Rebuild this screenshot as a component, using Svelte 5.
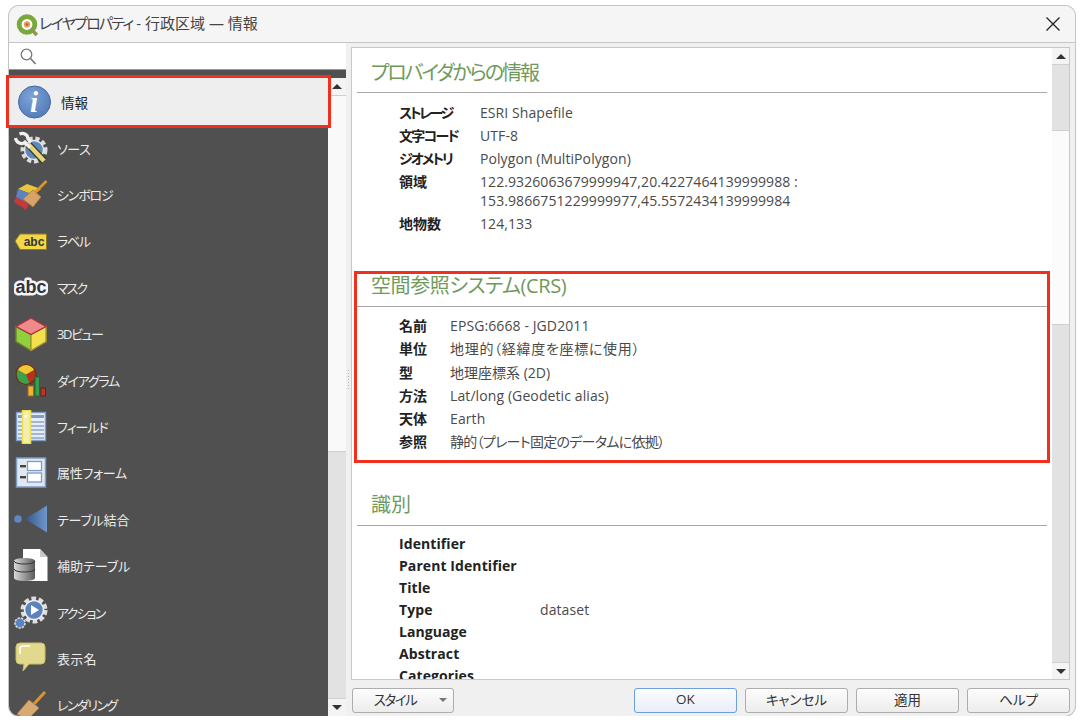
<script>
	// ls: tracking per label, kana in the original font run narrower than Noto's
	const items = [
		{ id: 'info', label: '情報', ls: 0 },
		{ id: 'source', label: 'ソース', ls: -0.4 },
		{ id: 'symbology', label: 'シンボロジ', ls: -1.2 },
		{ id: 'labels', label: 'ラベル', ls: -1.3 },
		{ id: 'mask', label: 'マスク', ls: -2 },
		{ id: 'view3d', label: '3Dビュー', ls: -1.4 },
		{ id: 'diagram', label: 'ダイアグラム', ls: -1.3 },
		{ id: 'fields', label: 'フィールド', ls: -1 },
		{ id: 'form', label: '属性フォーム', ls: -0.3 },
		{ id: 'join', label: 'テーブル結合', ls: -0.2 },
		{ id: 'aux', label: '補助テーブル', ls: 0 },
		{ id: 'actions', label: 'アクション', ls: -1.8 },
		{ id: 'display', label: '表示名', ls: 0.3 },
		{ id: 'rendering', label: 'レンダリング', ls: -1.5 }
	];

	const provider = [
		['ストレージ', 'ESRI Shapefile', -2.4],
		['文字コード', 'UTF-8', -1.7],
		['ジオメトリ', 'Polygon (MultiPolygon)', -2.1],
		['領域', '122.9326063679999947,20.4227464139999988 :\n153.9866751229999977,45.5572434139999984', 0],
		['地物数', '124,133', 0]
	];

	const crs = [
		['名前', 'EPSG:6668 - JGD2011', 0.1],
		['単位', '地理的（経緯度を座標に使用）', 0.7],
		['型', '地理座標系 (2D)', 0],
		['方法', 'Lat/long (Geodetic alias)', 0.1],
		['天体', 'Earth', 0.1],
		['参照', '静的（プレート固定のデータムに依拠）', -0.7]
	];

	const identification = [
		['Identifier', ''],
		['Parent Identifier', ''],
		['Title', ''],
		['Type', 'dataset'],
		['Language', ''],
		['Abstract', ''],
		['Categories', '']
	];
</script>

<div class="window">
	<header class="titlebar">
		<svg class="logo" viewBox="0 0 22 22" width="23" height="23">
			<circle cx="10.5" cy="10" r="7.5" fill="#fff" stroke="#79a83c" stroke-width="4.6" />
			<path d="M14 14l6 6" stroke="#8a9a50" stroke-width="3.4" />
			<circle cx="10.5" cy="10" r="3" fill="#e8a05c" />
			<circle cx="10.5" cy="10" r="1.2" fill="#d8503c" />
		</svg>
		<span class="title"><span class="kana">レイヤプロパティ</span> - 行政区域 — 情報</span>
		<svg class="close" viewBox="0 0 14 14" width="14" height="14">
			<path d="M0.5 0.5l13 13M13.5 0.5l-13 13" stroke="#222" stroke-width="1.3" fill="none" />
		</svg>
	</header>

	<div class="body">
		<div class="left">
			<div class="search">
				<svg viewBox="0 0 16 17" width="16" height="17">
					<circle cx="6.5" cy="6.5" r="5.3" fill="none" stroke="#777" stroke-width="1.3" />
					<path d="M10.5 10.5l5 5.5" stroke="#777" stroke-width="1.6" />
				</svg>
			</div>
			<div class="band"></div>
			<div class="nav">
				<div class="list">
					{#each items as item, i}
						<div class="item" class:selected={i === 0}>
							<svg class="icon" viewBox="0 0 34 34" width="34" height="34">
								{#if item.id === 'info'}
									<defs>
										<radialGradient id="infoFill" cx="0.4" cy="0.35" r="0.75">
											<stop offset="0" stop-color="#7da3d8" />
											<stop offset="1" stop-color="#4f78b6" />
										</radialGradient>
									</defs>
									<circle cx="16.5" cy="17" r="16" fill="url(#infoFill)" stroke="#45699f" />
									<text x="16" y="26.5" class="info-i">i</text>
								{:else if item.id === 'source'}
									<circle cx="20" cy="19" r="11" fill="none" stroke="#dcdcdc" stroke-width="5" stroke-dasharray="4 2.6" />
									<circle cx="20" cy="19" r="9.5" fill="#5f88bd" stroke="#e8e8e8" stroke-width="1.4" />
									<path d="M14 13l16 17" stroke="#3a3a2a" stroke-width="7" />
									<path d="M14 13l16 17" stroke="#e6d67a" stroke-width="4.6" />
									<path d="M1.500 7c1 5 6 7 9.500 4.500l5 5" fill="none" stroke="#f0f0f0" stroke-width="3.200" />
									<path d="M5.500 3c4-1.500 8.500 0.500 8.500 5l3 3.500" fill="none" stroke="#f0f0f0" stroke-width="3.200" />
								{:else if item.id === 'symbology'}
									<path d="M4 11l9-5 14 5-7 6z" fill="#e8c83a" />
									<path d="M2 19l2-8 16 6-5 9z" fill="#5b83c0" />
									<path d="M0 24l2-5 13 7-3 6z" fill="#c8383a" />
									<path d="M32.5 3l-11 11" stroke="#d8962c" stroke-width="2.6" />
									<path d="M19 12l8 7-8 10-10-8z" fill="#d8a268" stroke="#a87840" stroke-width="0.8" />
								{:else if item.id === 'labels'}
									<path d="M1 17l5-7h26.5v15.5H6z" fill="#f0d848" stroke="#8d7a22" />
									<text x="20" y="22" class="abc-small">abc</text>
								{:else if item.id === 'mask'}
									<text x="17" y="23" class="abc-mask">abc</text>
								{:else if item.id === 'view3d'}
									<path d="M17 17.5L2 9.5v15l15 9z" fill="#8ed03e" stroke="#70862c" stroke-width="1.4" />
									<path d="M17 17.5l15-8v15l-15 9z" fill="#f4e04e" stroke="#a99c30" stroke-width="1.4" />
									<path d="M17 1L32 9.5l-15 8L2 9.5z" fill="#ee8a8a" stroke="#a8343a" stroke-width="1.4" />
								{:else if item.id === 'diagram'}
									<path d="M12 11.5l8.8-5a10 10 0 0 1-5 14.4z" fill="#b8301e" />
									<path d="M12 11.5l3.8 9.4A10 10 0 0 1 3.200 6.500z" fill="#3ea04a" />
									<path d="M12 11.500L3.200 6.500A10 10 0 0 1 20.800 6.500z" fill="#f2c832" />
									<circle cx="12" cy="11.500" r="10" fill="none" stroke="#6a2a14" stroke-width="1.2" />
									<rect x="14" y="23" width="5.500" height="10" fill="#f2b332" stroke="#9c6a1c" />
									<rect x="21" y="14" width="4.500" height="19" fill="#35a04c" stroke="#1e6a30" />
									<rect x="27" y="25" width="4.500" height="8" fill="#c03426" stroke="#701a12" />
								{:else if item.id === 'fields'}
									<rect x="2.500" y="2.500" width="29" height="28" fill="#e6edf6" stroke="#7d9cc6" stroke-width="1.400" />
									<rect x="4" y="5" width="26" height="3" fill="#7d9cc6" />
									<path d="M4 12h26M4 16h26M4 20h26M4 24h26M4 28h26" stroke="#8aa4c8" stroke-width="1.400" />
									<rect x="8.500" y="0.500" width="8" height="33" fill="#f4eeae" stroke="#f0e050" stroke-width="1.600" />
									<rect x="10.500" y="5" width="2.500" height="2.500" fill="#fff" />
								{:else if item.id === 'form'}
									<rect x="2.500" y="2" width="29" height="29" fill="#e2e8f1" stroke="#7d9cc6" stroke-width="1.500" />
									<rect x="6" y="9" width="6" height="2.400" fill="#444" />
									<rect x="6" y="20" width="6" height="2.400" fill="#444" />
									<rect x="13.500" y="5.500" width="14" height="9" fill="#fff" stroke="#7d9cc6" stroke-width="1.300" />
									<rect x="13.500" y="17" width="14" height="9" fill="#fff" stroke="#7d9cc6" stroke-width="1.300" />
								{:else if item.id === 'join'}
									<defs>
										<linearGradient id="joinFill" x1="0" x2="1" y1="0" y2="0">
											<stop offset="0" stop-color="#33568c" />
											<stop offset="1" stop-color="#6f97ca" />
										</linearGradient>
									</defs>
									<circle cx="4" cy="17" r="3.800" fill="#5f88c0" />
									<path d="M11 17L33 3.500v27z" fill="url(#joinFill)" />
								{:else if item.id === 'aux'}
									<defs>
										<linearGradient id="auxFill" x1="0" x2="1" y1="0" y2="0">
											<stop offset="0" stop-color="#d8d8d8" />
											<stop offset="0.500" stop-color="#9a9a9a" />
											<stop offset="1" stop-color="#5a5a5a" />
										</linearGradient>
									</defs>
									<path d="M9 0h17l7.500 8v24H9z" fill="#fff" />
									<path d="M26 0l7.500 8H26z" fill="#c8c8c8" />
									<path d="M0 12c0-4 21-4 21 0v17c0 4-21 4-21 0z" fill="url(#auxFill)" />
									<path d="M0 12c0 4 21 4 21 0M0 20c0 4 21 4 21 0" fill="none" stroke="#333" stroke-width="1" />
								{:else if item.id === 'actions'}
									<circle cx="20" cy="15" r="11" fill="none" stroke="#dedede" stroke-width="5" stroke-dasharray="4.500 2.500" />
									<circle cx="20" cy="15" r="9.500" fill="#5b83c0" stroke="#eee" stroke-width="1.600" />
									<path d="M17 10l8 5-8 5z" fill="#fff" />
									<circle cx="6" cy="28" r="5" fill="#5b83c0" stroke="#ddd" stroke-width="1.600" stroke-dasharray="2.400 1" />
								{:else if item.id === 'display'}
									<path d="M6 2h21a4 4 0 0 1 4 4v13a4 4 0 0 1-4 4H15l-6 7 1-7H6a4 4 0 0 1-4-4V6a4 4 0 0 1 4-4z" fill="#e2d88e" stroke="#cdbf62" />
									<path d="M6 13V8c0-2 1-3 3-3h7" fill="none" stroke="#fff" stroke-width="1.600" />
								{:else}
									<path d="M31 4L19 17" stroke="#d8962c" stroke-width="3" />
									<path d="M15 12l10 8-12 12-10-6z" fill="#d8a972" stroke="#b08448" stroke-width="0.800" />
								{/if}
							</svg>
							<span style:letter-spacing="{item.ls}px">{item.label}</span>
						</div>
					{/each}
				</div>
				<div class="vscroll">
					<div class="arrow-btn"><i class="up"></i></div>
					<div class="track"></div>
					<div class="track thumb"></div>
					<div class="arrow-btn low"><i class="down"></i></div>
				</div>
			</div>
		</div>

		<div class="splitter"></div>

		<div class="right">
			<div class="frame">
				<div class="content">
					<section class="provider">
						<h2>プロバイダからの情報</h2>
						<div class="rows">
							{#each provider as [k, v, ls]}
								<div class="row"><b style:letter-spacing="{ls}px">{k}</b><span>{v}</span></div>
							{/each}
						</div>
					</section>
					<section class="crs">
						<h2>空間参照システム(CRS)</h2>
						<div class="rows">
							{#each crs as [k, v, ls]}
								<div class="row"><b>{k}</b><span style:letter-spacing="{ls}px">{v}</span></div>
							{/each}
						</div>
					</section>
					<section class="ident">
						<h2>識別</h2>
						<div class="rows">
							{#each identification as [k, v]}
								<div class="row"><b>{k}</b><span>{v}</span></div>
							{/each}
						</div>
					</section>
				</div>
				<div class="vscroll page">
					<div class="arrow-btn"><i class="up"></i></div>
					<div class="seg seg-a"></div>
					<div class="seg seg-b"></div>
					<div class="seg seg-c"></div>
					<div class="arrow-btn low"><i class="down"></i></div>
				</div>
			</div>
			<footer class="buttons">
				<button class="style-btn"><span class="kana">スタイル</span><i class="down"></i></button>
				<button class="ok">OK</button>
				<button>キャンセル</button>
				<button>適用</button>
				<button>ヘルプ</button>
			</footer>
		</div>
	</div>
</div>

<style>
	:global(body) {
		background: #fff;
	}

	.window {
		box-sizing: border-box;
		margin: 6px 0 0 9px;
		width: 1066px;
		height: 710px;
		display: flex;
		flex-direction: column;
		background: #f0f0f0;
		border-radius: 10px;
		box-shadow: 0 0 0 1px #c4c4c4;
		font-family: 'Open Sans', 'Noto Sans CJK JP', sans-serif;
		font-feature-settings: 'palt';
		font-size: 14px;
		color: #444;
	}

	.titlebar {
		flex: none;
		height: 36px;
		display: flex;
		align-items: center;
		padding: 0 15px 0 7px;
		border-bottom: 1px solid #c6c6c6;
		background: #f5f5f5;
		border-radius: 10px 10px 0 0;
		box-sizing: content-box;
	}

	.title {
		font-size: 15px;
		color: #444;
		margin: -3px 0 0 0;
	}

	.title .kana {
		letter-spacing: -1.7px;
	}

	.logo {
		margin-top: 2px;
	}

	.close {
		margin-left: auto;
	}

	.body {
		flex: 1;
		display: flex;
		min-height: 0;
	}

	.left {
		flex: none;
		width: 337px;
		display: flex;
		flex-direction: column;
	}

	.search {
		flex: none;
		height: 26px;
		background: #fff;
		border-bottom: 1px solid #999;
		display: flex;
		align-items: center;
		padding-left: 11px;
	}

	.band {
		flex: none;
		height: 8px;
		background: #505050;
	}

	.nav {
		flex: 1;
		min-height: 0;
		display: flex;
		clip-path: inset(-4px -4px 0 -4px);
	}

	.list {
		width: 319px;
		flex: none;
		background: #505050;
		border-radius: 0 0 0 10px;
		display: flex;
		flex-direction: column;
	}

	.item {
		flex: none;
		height: 46.4px;
		display: flex;
		align-items: center;
		gap: 9px;
		padding-left: 5px;
		color: #ececec;
		font-size: 13px;
	}

	.item.selected {
		position: relative;
		height: 47px;
		padding-left: 9px;
		background: #eeeeee;
		color: #222;
		font-size: 13.5px;
		outline: 3px solid #f0301c;
		outline-offset: 0;
	}

	.icon {
		flex: none;
	}

	.info-i {
		font-family: 'Liberation Serif', serif;
		font-style: italic;
		font-weight: 700;
		font-size: 29px;
		fill: #fff;
		text-anchor: middle;
	}

	.abc-small {
		font-family: 'Liberation Sans', sans-serif;
		font-weight: 700;
		font-size: 12px;
		fill: #333;
		text-anchor: middle;
	}

	.abc-mask {
		font-family: 'Liberation Sans', sans-serif;
		font-weight: 700;
		font-size: 18px;
		fill: #333;
		stroke: #f4f4ff;
		stroke-width: 5px;
		paint-order: stroke;
		stroke-linejoin: round;
		text-anchor: middle;
	}

	.vscroll {
		flex: none;
		width: 18px;
		display: flex;
		flex-direction: column;
		background: #f8f8f8;
	}

	.arrow-btn {
		flex: none;
		height: 18px;
		display: flex;
		align-items: center;
		justify-content: center;
		background: #f4f4f4;
		border-bottom: 1px solid #d0d0d0;
		box-sizing: border-box;
	}

	.arrow-btn.low {
		border-bottom: 0;
		border-top: 1px solid #d0d0d0;
	}

	.up,
	.down {
		display: block;
		width: 0;
		height: 0;
		border-left: 5px solid transparent;
		border-right: 5px solid transparent;
	}

	.up {
		border-bottom: 5px solid #333;
	}

	.down {
		border-top: 5px solid #333;
	}

	.track {
		flex: 1;
		background: #f9f9f9;
	}

	.track.thumb {
		flex: none;
		height: 246px;
		background: #e2e2e2;
		border-top: 1px solid #d0d0d0;
	}

	.splitter {
		flex: none;
		width: 5px;
		position: relative;
	}

	.splitter::after {
		content: '';
		position: absolute;
		left: 2px;
		top: 327px;
		width: 1px;
		height: 20px;
		background: repeating-linear-gradient(#b4b4b4 0 1px, transparent 1px 3px);
	}

	.right {
		flex: 1;
		min-width: 0;
		padding-top: 4px;
		display: flex;
		flex-direction: column;
	}

	.frame {
		box-sizing: border-box;
		height: 633px;
		width: 719px;
		flex: none;
		display: flex;
		background: #fff;
		border: 1px solid #c8c8c8;
	}

	.content {
		flex: 1;
		min-width: 0;
		overflow: hidden;
	}

	.vscroll.page {
		width: 17px;
		background: #f0f0f0;
	}

	.page .arrow-btn {
		height: 17px;
	}

	.seg-a {
		height: 65px;
		background: #e2e2e2;
		border-bottom: 1px solid #cfcfcf;
	}

	.seg-b {
		height: 193px;
		background: #fbfbfb;
	}

	.seg-c {
		flex: 1;
		background: #e2e2e2;
		border-top: 1px solid #cfcfcf;
	}

	section {
		margin: 0 2px;
	}

	h2 {
		margin: 0 3px;
		font-size: 20px;
		font-weight: 400;
		line-height: 28px;
		color: #6f9a5c;
		padding-left: 14px;
		border-bottom: 1.5px solid #a8a8a8;
	}

	.provider {
		padding-top: 11px;
	}

	.provider h2 {
		padding-bottom: 5px;
		letter-spacing: -2.1px;
	}

	.crs {
		margin-top: 35.5px;
		padding: 1px 0 0;
		outline: 3px solid #f0301c;
		outline-offset: -3px;
		height: 192px;
		box-sizing: border-box;
	}

	.crs h2 {
		padding-bottom: 5.5px;
		letter-spacing: -0.4px;
	}

	.crs .rows {
		padding-top: 8px;
	}

	.ident {
		margin-top: 28px;
	}

	.ident h2 {
		padding-bottom: 6px;
	}

	.rows {
		padding: 8.5px 0 0 45px;
	}

	.ident .rows {
		padding-top: 7px;
	}

	.row {
		display: flex;
		padding: 2.4px 0;
		line-height: 18.4px;
		white-space: pre-line;
		letter-spacing: 0.08px;
	}

	.row b {
		flex: none;
		font-weight: 600;
		color: #222;
	}

	.row span {
		color: #4a4a4a;
	}

	.provider .row b {
		width: 81px;
	}

	.crs .row b {
		width: 51px;
	}

	.ident .row {
		padding: 1.8px 0;
	}

	.ident .row b {
		width: 141px;
		font-weight: 700;
	}

	.buttons {
		flex: none;
		display: flex;
		gap: 8px;
		padding: 8px 0 0 1px;
		width: 719px;
		box-sizing: border-box;
	}

	button {
		width: 103px;
		height: 25px;
		padding: 0 0 3px;
		font: inherit;
		font-size: 13.5px;
		color: #333;
		background: linear-gradient(#fdfdfd, #ececec);
		border: 1px solid #adadad;
		border-radius: 3px;
	}

	.style-btn {
		margin-right: auto;
		width: 102px;
		position: relative;
		padding-right: 16px;
	}

	.style-btn .kana {
		letter-spacing: -1.4px;
	}

	.style-btn .down {
		position: absolute;
		right: 6px;
		top: 9px;
		border-left-width: 4px;
		border-right-width: 4px;
		border-top: 4px solid #777;
	}

	button.ok {
		border-color: #6d9fd8;
		background: linear-gradient(#fbfdff, #e8eef6);
	}
</style>
